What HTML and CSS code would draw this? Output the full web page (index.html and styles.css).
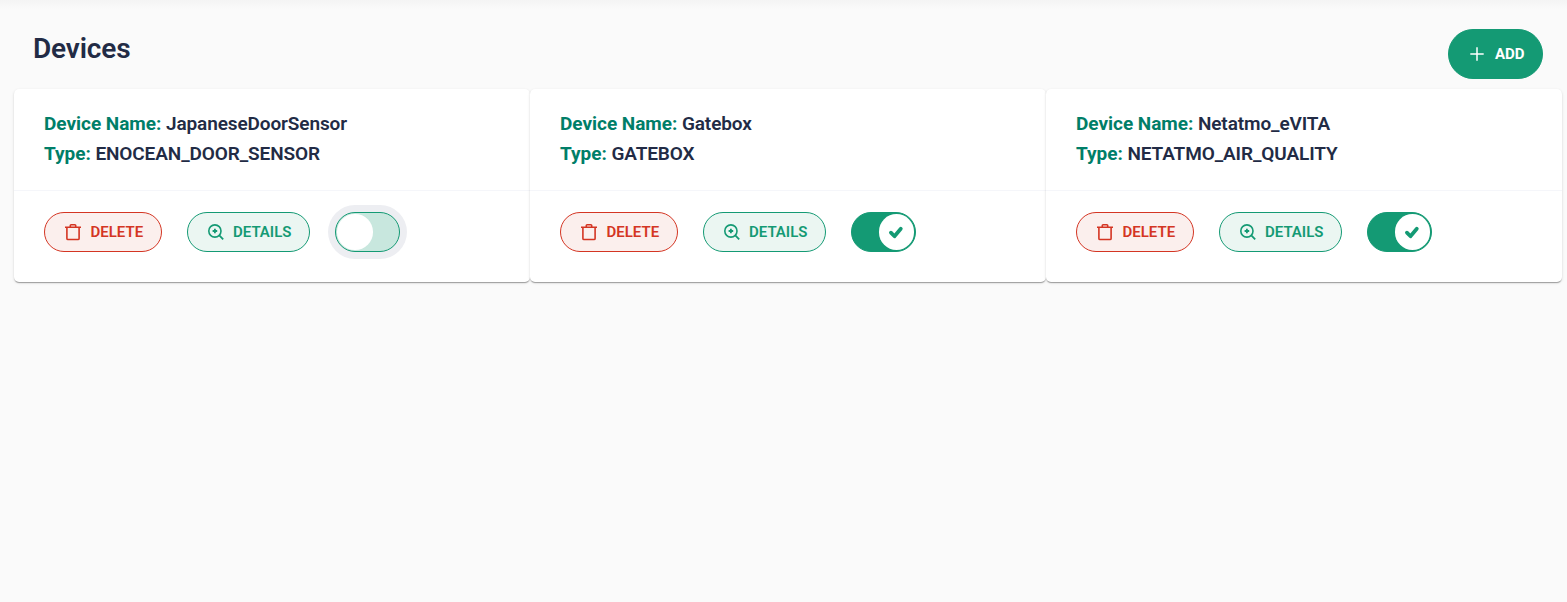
FILE: index.html
```
<!DOCTYPE html>
<html lang="en">
<head>
<meta charset="utf-8">
<title>Devices</title>
<link rel="stylesheet" href="styles.css">
</head>
<body>
<svg class="sprite" aria-hidden="true">
  <symbol id="trash" viewBox="0 0 18 18"><path d="M1 4.3h16M6.3 4.2V2.5Q6.3 1.7 7.1 1.7h3.8q.8 0 .8.8v1.7M2.9 4.5v10.9q0 1.1 1.1 1.1h10q1.1 0 1.1-1.1V4.5" fill="none" stroke="currentColor" stroke-width="1.6"/></symbol>
  <symbol id="zoom" viewBox="0 0 18 18"><circle cx="7.9" cy="8" r="6.1" fill="none" stroke="currentColor" stroke-width="1.6"/><path d="M12.3 12.4l3.9 3.9M7.9 5.7v4.6M5.6 8h4.6" fill="none" stroke="currentColor" stroke-width="1.8"/></symbol>
  <symbol id="check" viewBox="0 0 16 16"><path d="M2.9 8.6l3.6 3.7 6.3-7.6" fill="none" stroke="currentColor" stroke-width="3.7" stroke-linecap="round" stroke-linejoin="round"/></symbol>
</svg>
<main class="page">
  <header class="page-header">
    <h1 class="title">Devices</h1>
    <button class="btn btn-add"><svg class="plus" viewBox="0 0 14 14"><path d="M7 .3v13.4M.3 7h13.4" stroke="currentColor" stroke-width="1.5"/></svg>ADD</button>
  </header>
  <section class="devices">
    <article class="card">
      <div class="card-head"><p><span class="label">Device Name:</span> JapaneseDoorSensor</p><p><span class="label">Type:</span> ENOCEAN_DOOR_SENSOR</p></div>
      <div class="card-body">
        <button class="btn btn-delete"><svg class="icon"><use href="#trash"/></svg>DELETE</button>
        <button class="btn btn-details"><svg class="icon"><use href="#zoom"/></svg>DETAILS</button>
        <span class="toggle focused"><span class="knob"></span></span>
      </div>
    </article>
    <article class="card">
      <div class="card-head"><p><span class="label">Device Name:</span> Gatebox</p><p><span class="label">Type:</span> GATEBOX</p></div>
      <div class="card-body">
        <button class="btn btn-delete"><svg class="icon"><use href="#trash"/></svg>DELETE</button>
        <button class="btn btn-details"><svg class="icon"><use href="#zoom"/></svg>DETAILS</button>
        <span class="toggle on"><span class="knob"><svg class="check"><use href="#check"/></svg></span></span>
      </div>
    </article>
    <article class="card">
      <div class="card-head"><p><span class="label">Device Name:</span> Netatmo_eVITA</p><p><span class="label">Type:</span> NETATMO_AIR_QUALITY</p></div>
      <div class="card-body">
        <button class="btn btn-delete"><svg class="icon"><use href="#trash"/></svg>DELETE</button>
        <button class="btn btn-details"><svg class="icon"><use href="#zoom"/></svg>DETAILS</button>
        <span class="toggle on"><span class="knob"><svg class="check"><use href="#check"/></svg></span></span>
      </div>
    </article>
  </section>
</main>
</body>
</html>
```
FILE: styles.css
```
* { box-sizing: border-box; }
body {
  margin: 0;
  min-height: 100vh;
  background: linear-gradient(#f4f4f4, #fafafa 9px) #fafafa;
  color: #222b45;
  font-family: Roboto, "Open Sans", sans-serif;
}
.sprite { display: block; width: 0; height: 0; }
.page { padding: 29px 5px 0 14px; }
.page-header {
  display: flex;
  justify-content: space-between;
  align-items: flex-start;
  height: 60px;
  padding: 0 19px;
}
.title { margin: 0; font-size: 28px; line-height: 40px; font-weight: 600; letter-spacing: -.15px; }
.btn {
  display: flex;
  align-items: center;
  height: 40px;
  padding: 0;
  border: 1px solid;
  border-radius: 25px;
  font: 600 15px/20px Roboto, sans-serif;
}
.btn-add {
  width: 95px;
  height: 50px;
  padding-left: 21px;
  gap: 11px;
  font-weight: 700;
  font-size: 15px;
  color: #fff;
  background: #149a74;
  border-color: #149a74;
}
.plus { width: 14px; height: 14px; flex: none; }
.devices { display: grid; grid-template-columns: repeat(3, 516px); }
.card {
  height: 193px;
  border-radius: 5px;
  background: #fff;
  box-shadow: 0 2px 1px -1px rgba(0,0,0,.2), 0 1px 1px rgba(0,0,0,.14), 0 1px 3px rgba(0,0,0,.12);
}
.card-head {
  height: 102px;
  padding: 20px 30px 0;
  border-bottom: 1px solid #f5f6fa;
  font-size: 19px;
  line-height: 30px;
  font-weight: 600;
  letter-spacing: -.11px;
}
.card-head p { margin: 0; }
.label { color: #007e68; font-weight: 700; letter-spacing: -.03px; }
.card-body { display: flex; align-items: center; gap: 25px; padding: 21px 30px 0; }
.icon { width: 18px; height: 18px; flex: none; }
.btn-delete { width: 118px; padding-left: 19px; gap: 8.5px; color: #d43523; background: #fbefed; }
.btn-details { width: 123px; padding-left: 19px; gap: 8px; color: #149a74; background: #ebf6f2; }
.toggle {
  display: flex;
  align-items: center;
  width: 65px;
  height: 40px;
  padding: 1px;
  border: 1px solid #149a74;
  border-radius: 20px;
  background: #c8e7de;
}
.toggle.focused { box-shadow: 0 0 0 7px #edeef2; }
.toggle.on { justify-content: flex-end; background: #149a74; }
.knob {
  display: flex;
  align-items: center;
  justify-content: center;
  width: 35.5px;
  height: 35.5px;
  border-radius: 50%;
  background: #fff;
  color: #149a74;
}
.check { width: 16px; height: 16px; }
```
